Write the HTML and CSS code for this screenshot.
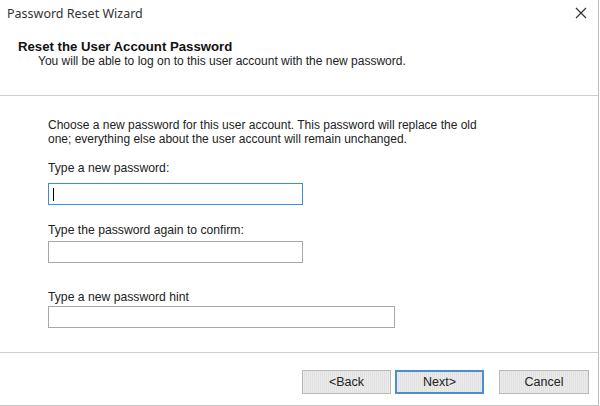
FILE: index.html
```html
<!DOCTYPE html>
<html>
<head>
<meta charset="utf-8">
<title>Password Reset Wizard</title>
<link rel="stylesheet" href="styles.css">
</head>
<body>
<div class="window">
  <div class="titlebar">
    <span class="title">Password Reset Wizard</span>
    <span class="close" aria-label="Close">
      <svg width="12" height="12" viewBox="0 0 12 12"><path d="M1 1 L11 11 M11 1 L1 11" stroke="#333" stroke-width="1.2" fill="none"/></svg>
    </span>
  </div>
  <div class="header">
    <div class="heading">Reset the User Account Password</div>
    <div class="subheading">You will be able to log on to this user account with the new password.</div>
  </div>
  <div class="content">
    <p class="intro">Choose a new password for this user account. This password will replace the old one; everything else about the user account will remain unchanged.</p>
    <label class="label">Type a new password:</label>
    <div class="input focused"><span class="caret"></span></div>
    <label class="label l2">Type the password again to confirm:</label>
    <div class="input"></div>
    <label class="label l3">Type a new password hint</label>
    <div class="input wide"></div>
  </div>
  <div class="footer">
    <button class="btn">&lt;Back</button>
    <button class="btn default">Next&gt;</button>
    <button class="btn cancel">Cancel</button>
  </div>
</div>
</body>
</html>
```
FILE: styles.css
```css
html, body {
  margin: 0;
  padding: 0;
  background: #ffffff;
}
body {
  width: 600px;
  height: 406px;
  overflow: hidden;
  font-family: "Liberation Sans", Arial, sans-serif;
  color: #1a1a1a;
}
.window {
  width: 598px;
  height: 405px;
  border-right: 1px solid #bdbdbd;
  border-bottom: 1px solid #c4c4c4;
  display: flex;
  flex-direction: column;
}
.titlebar {
  height: 29px;
  display: flex;
  align-items: center;
  justify-content: space-between;
  padding: 0 11px 0 7px;
}
.title {
  font-family: "Noto Sans", "Open Sans", sans-serif;
  font-size: 12.5px;
  color: #333;
  margin-top: -3px;
}
.close {
  display: flex;
  margin-top: -3px;
}
.header {
  height: 67px;
  border-bottom: 1px solid #cfcfcf;
  padding: 10px 0 0 18px;
  box-sizing: border-box;
}
.heading {
  font-weight: bold;
  font-size: 13.2px;
  color: #111;
  line-height: 15px;
}
.subheading {
  font-size: 12px;
  color: #222;
  padding-left: 20px;
  line-height: 14px;
}
.content {
  height: 257px;
  border-bottom: 1px solid #cfcfcf;
  padding: 22px 0 0 48px;
  box-sizing: border-box;
}
.intro {
  margin: 0;
  font-size: 12px;
  line-height: 14px;
  width: 450px;
  color: #222;
}
.label {
  display: block;
  font-size: 12.2px;
  line-height: 14px;
  color: #222;
  margin-top: 15px;
  margin-bottom: 8px;
}
.label.l2 { margin-top: 18px; margin-bottom: 4px; }
.label.l3 { margin-top: 27px; margin-bottom: 2px; }
.input {
  width: 255px;
  height: 22px;
  box-sizing: border-box;
  border: 1px solid #a8a8a8;
  background: #fff;
  display: flex;
  align-items: center;
  padding-left: 4px;
}
.input.focused {
  border-color: #3c8fd6;
}
.input.wide {
  width: 347px;
}
.caret {
  width: 1px;
  height: 13px;
  background: #000;
}
.footer {
  flex: 1;
  display: flex;
  justify-content: flex-end;
  align-items: flex-start;
  padding: 17px 9px 0 0;
  gap: 4px;
}
.btn {
  width: 89px;
  height: 24px;
  font-family: "Liberation Sans", Arial, sans-serif;
  font-size: 12.5px;
  color: #222;
  background: #e1e1e1;
  background-image: repeating-linear-gradient(90deg, rgba(255,255,255,0.35) 0 1px, transparent 1px 2px);
  border: 1px solid #b9b9b9;
  padding: 0;
}
.btn.default {
  border: 2px solid #4a8fd0;
}
.btn.cancel {
  margin-left: 11px;
  width: 90px;
}
```
